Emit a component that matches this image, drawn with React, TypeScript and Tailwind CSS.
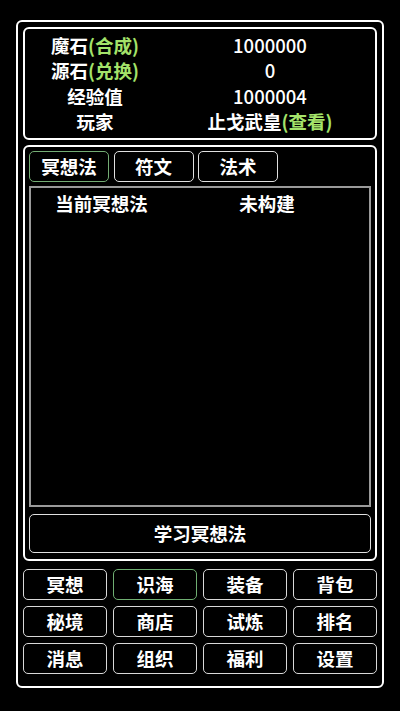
import React from "react";

const font = { fontFamily: '"Noto Sans CJK SC", "Noto Sans", sans-serif' };

export default function App() {
  const grid = [
    ["冥想", false],
    ["识海", true],
    ["装备", false],
    ["背包", false],
    ["秘境", false],
    ["商店", false],
    ["试炼", false],
    ["排名", false],
    ["消息", false],
    ["组织", false],
    ["福利", false],
    ["设置", false],
  ] as const;

  return (
    <div className="w-[400px] h-[711px] bg-black text-white font-bold pt-[20px] pl-[16px]" style={font}>
      <div className="w-[368px] h-[668px] border-2 border-white rounded-[6px] p-[5px] flex flex-col">
        {/* top stats */}
        <div className="h-[113px] border-2 border-white rounded-[6px] py-[4px] grid grid-cols-[140px_1fr] text-[18.5px] leading-[25px] text-center">
          <div>
            魔石<span className="text-[#a4e36a]">(合成)</span>
          </div>
          <div className="font-medium">1000000</div>
          <div>
            源石<span className="text-[#a4e36a]">(兑换)</span>
          </div>
          <div className="font-medium">0</div>
          <div>经验值</div>
          <div className="font-medium">1000004</div>
          <div>玩家</div>
          <div>
            止戈武皇<span className="text-[#a4e36a]">(查看)</span>
          </div>
        </div>

        {/* middle panel */}
        <div className="mt-[5px] h-[416px] border-2 border-white rounded-[6px] px-[4px] pt-[4px] pb-[6px] flex flex-col">
          <div className="flex gap-[4.5px] h-[31px]">
            <div className="w-[80px] h-[31px] border-[1.5px] border-[#74ad74] rounded-[5px] flex items-center justify-center text-[18.5px]">
              冥想法
            </div>
            <div className="w-[80px] h-[31px] border-[1.5px] border-[#e0e0e0] rounded-[5px] flex items-center justify-center text-[18.5px]">
              符文
            </div>
            <div className="w-[80px] h-[31px] border-[1.5px] border-[#e0e0e0] rounded-[5px] flex items-center justify-center text-[18.5px]">
              法术
            </div>
          </div>
          <div className="mt-[4px] flex-1 border-2 border-[#9a9a9a] pt-[2px]">
            <div className="grid grid-cols-[141px_190px] text-[18.5px] leading-[26px] text-center">
              <div>当前冥想法</div>
              <div>未构建</div>
            </div>
          </div>
          <div className="mt-[7px] h-[39px] border-[1.5px] border-[#e0e0e0] rounded-[5px] flex items-center justify-center text-[18.5px]">
            学习冥想法
          </div>
        </div>

        {/* bottom grid */}
        <div className="mt-[8px] grid grid-cols-4 gap-x-[6px] gap-y-[6px]">
          {grid.map(([label, sel]) => (
            <div
              key={label}
              className={
                "h-[31px] rounded-[5px] border-[1.5px] flex items-center justify-center text-[18.5px] " +
                (sel ? "border-[#6fae72]" : "border-[#d8d8d8]")
              }
            >
              {label}
            </div>
          ))}
        </div>
      </div>
    </div>
  );
}
